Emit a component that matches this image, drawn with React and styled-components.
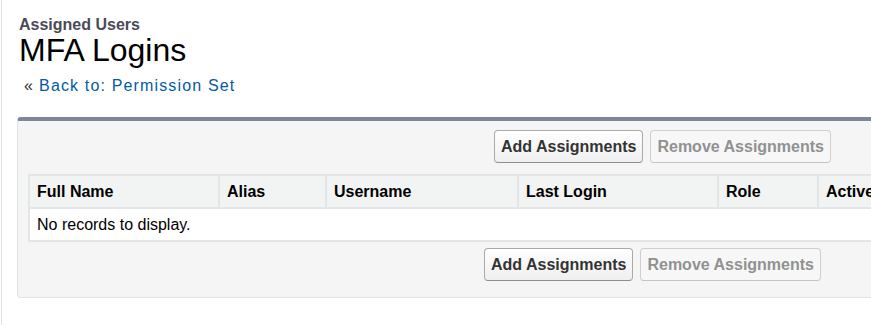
import styled, { createGlobalStyle } from "styled-components"

const GlobalStyle = createGlobalStyle`
  html, body {
    margin: 0;
    padding: 0;
    background: #fff;
    overflow: hidden;
  }
  body {
    font-family: "Liberation Sans", Arial, sans-serif;
    color: #000;
  }
`

const Page = styled.div`
  margin-left: 1px;
  border-left: 1px solid #e3e3e3;
  min-height: 325px;
  padding-left: 15px;
  width: 1000px;
`
const Header = styled.div`
  padding-top: 15px;
  padding-left: 2px;
`
const Type = styled.h2`
  margin: 0;
  font-size: 16px;
  line-height: 19px;
  font-weight: bold;
  color: #4a4a56;
`
const Title = styled.h1`
  margin: 0;
  font-size: 32px;
  line-height: 33px;
  font-weight: normal;
  color: #000;
`
const Crumb = styled.div`
  margin-top: 9px;
  padding-left: 7px;
  font-size: 16px;
  line-height: 20px;
  color: #333;
  letter-spacing: 1.15px;
`
const BackLink = styled.a`
  color: #015ba7;
  text-decoration: none;
  margin-left: 5px;
`
const Panel = styled.div`
  margin-top: 21px;
  border: 1px solid #e0e3e5;
  border-top: 4px solid #7d879c;
  border-radius: 4px;
  background: #f5f5f5;
  padding: 9px 10px 16px 10px;
  width: 1100px;
`
const ButtonBar = styled.div`
  display: flex;
  gap: 7px;
  padding-left: ${p => p.$offset}px;
`
const Button = styled.button`
  font-family: "Liberation Sans", Arial, sans-serif;
  font-size: 16px;
  font-weight: bold;
  line-height: 19px;
  padding: 6px 6px;
  color: ${p => (p.disabled ? "#919191" : "#333")};
  background: ${p => (p.disabled ? "#f7f7f7" : "linear-gradient(#ffffff, #efefef)")};
  border: 1px solid ${p => (p.disabled ? "#cfcfcf" : "#aaaaaa")};
  border-bottom-color: ${p => (p.disabled ? "#c4c4c4" : "#8e8e8e")};
  border-radius: 4px;
  cursor: ${p => (p.disabled ? "default" : "pointer")};
`
const Table = styled.table`
  margin: 11px 0 6px 0;
  border-collapse: collapse;
  table-layout: fixed;
  background: #fff;
  border: 2px solid #e3e6e8;
  width: 1090px;
`
const Th = styled.th`
  background: #f2f3f3;
  border: 2px solid #e3e6e8;
  text-align: left;
  font-size: 16px;
  font-weight: bold;
  padding: 6px 8px 6px 7px;
  height: 19px;
  line-height: 19px;
  white-space: nowrap;
  overflow: hidden;
`
const Td = styled.td`
  font-size: 16px;
  line-height: 19px;
  padding: 6px 8px 6px 7px;
`

const columns = [
  { label: "Full Name", w: 190 },
  { label: "Alias", w: 107 },
  { label: "Username", w: 192 },
  { label: "Last Login", w: 200 },
  { label: "Role", w: 100 },
  { label: "Active", w: 301 },
]

const App = () => {
  return (
    <Page>
      <GlobalStyle />
      <Header>
        <Type>Assigned Users</Type>
        <Title>MFA Logins</Title>
      </Header>
      <Crumb>
        «<BackLink href="#">Back to: Permission Set</BackLink>
      </Crumb>
      <Panel>
        <ButtonBar $offset={466}>
          <Button>Add Assignments</Button>
          <Button disabled>Remove Assignments</Button>
        </ButtonBar>
        <Table>
          <colgroup>
            {columns.map(c => (
              <col key={c.label} style={{ width: c.w }} />
            ))}
          </colgroup>
          <thead>
            <tr>
              {columns.map(c => (
                <Th key={c.label}>{c.label}</Th>
              ))}
            </tr>
          </thead>
          <tbody>
            <tr>
              <Td colSpan={columns.length}>No records to display.</Td>
            </tr>
          </tbody>
        </Table>
        <ButtonBar $offset={456}>
          <Button>Add Assignments</Button>
          <Button disabled>Remove Assignments</Button>
        </ButtonBar>
      </Panel>
    </Page>
  )
}

export default App
